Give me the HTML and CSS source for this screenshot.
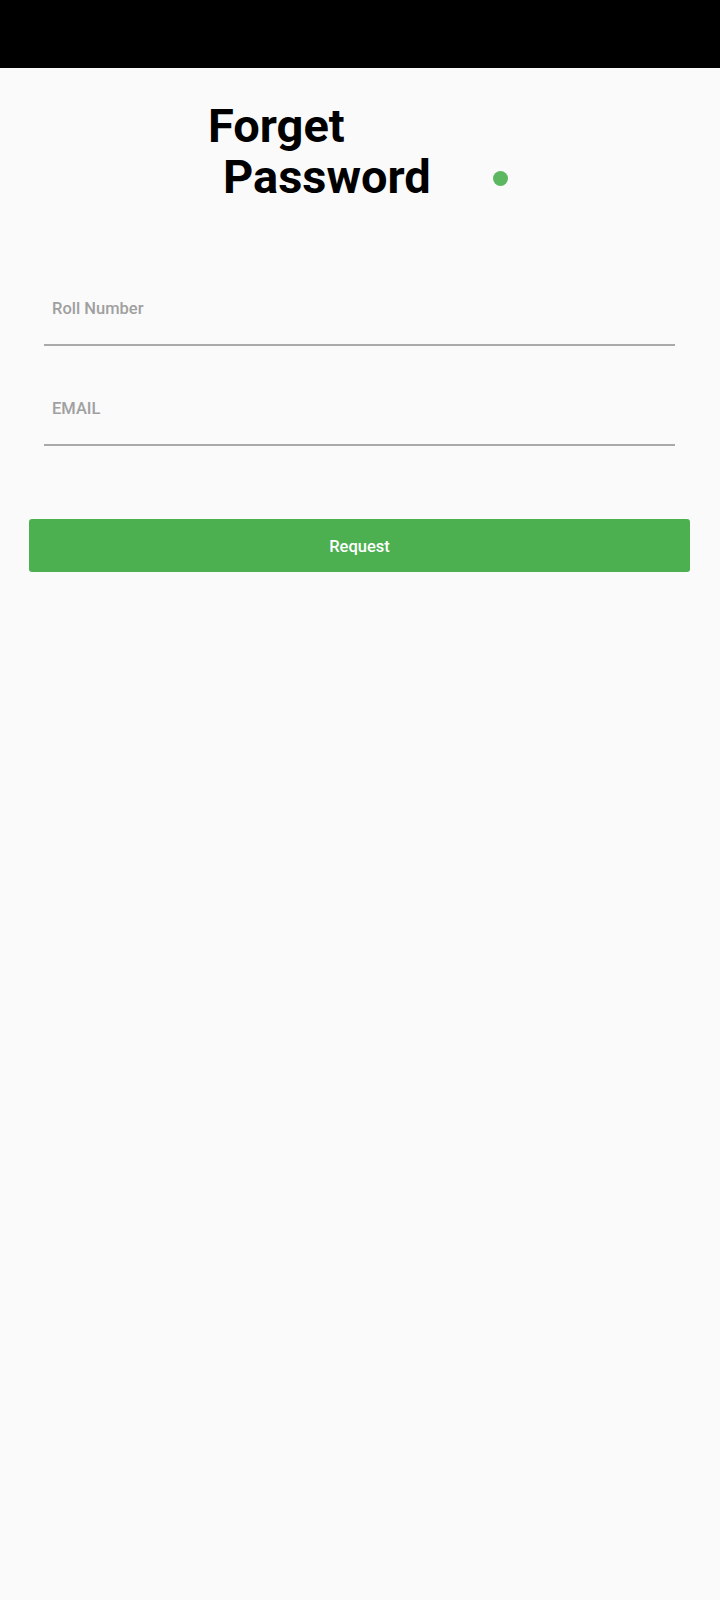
FILE: index.html
```html
<!DOCTYPE html>
<html lang="en">
<head>
<meta charset="utf-8">
<title>Forget Password</title>
<link rel="stylesheet" href="styles.css">
</head>
<body>
<div class="status-bar"></div>
<main class="screen">
  <div class="title-row">
    <h1 class="title">
      <span class="title-line">Forget</span>
      <span class="title-line indent">Password</span>
    </h1>
    <span class="dot"></span>
  </div>
  <form class="form">
    <div class="field"><span class="hint">Roll Number</span></div>
    <div class="field"><span class="hint">EMAIL</span></div>
  </form>
  <button class="request" type="button">Request</button>
</main>
</body>
</html>
```
FILE: styles.css
```css
html, body {
  margin: 0;
  padding: 0;
  background: #fafafa;
  font-family: Roboto, "Noto Sans", "Liberation Sans", sans-serif;
}

.status-bar {
  height: 68px;
  background: #000;
}

.screen {
  display: flex;
  flex-direction: column;
  min-height: 1532px;
}

.title-row {
  display: flex;
  align-items: flex-end;
  padding-top: 32px;
  padding-left: 208px;
}

.title {
  margin: 0;
  font-size: 47px;
  font-weight: 700;
  line-height: 51px;
  color: #000;
}

.title-line {
  display: block;
}

.title-line.indent {
  padding-left: 15px;
}

.dot {
  width: 15px;
  height: 15px;
  border-radius: 50%;
  background: #5cb860;
  margin-left: 62px;
  margin-bottom: 16px;
}

.form {
  display: flex;
  flex-direction: column;
  gap: 53px;
  margin: 97px 45px 0 44px;
}

.field {
  padding: 0 0 25px 8px;
  border-bottom: 2px solid #a9a9a9;
}

.hint {
  display: block;
  font-size: 16.5px;
  font-weight: 500;
  line-height: 20px;
  color: #a0a0a0;
}

.request {
  margin: 73px 30px 0 29px;
  height: 53px;
  padding: 2px 0 0;
  border: none;
  border-radius: 3px;
  background: #4caf50;
  color: #fff;
  font-family: Roboto, "Noto Sans", "Liberation Sans", sans-serif;
  font-size: 16.5px;
  font-weight: 500;
  line-height: 20px;
}
```
